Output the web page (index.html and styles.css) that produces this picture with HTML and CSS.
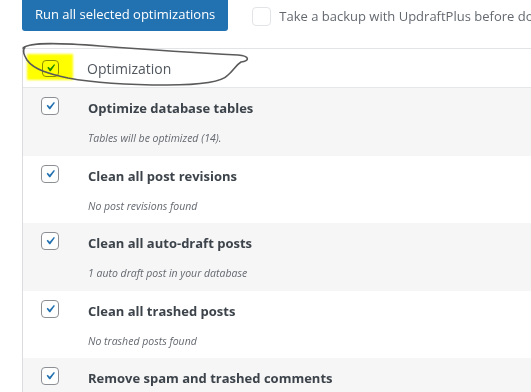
FILE: index.html
```html
<!DOCTYPE html>
<html lang="en">
<head>
    <meta charset="UTF-8">
    <meta name="viewport" content="width=device-width, initial-scale=1.0">
    <title>WP-Optimize</title>
    <link rel="stylesheet" href="styles.css">
</head>
<body>
    <div class="toolbar">
        <button class="btn">Run all selected optimizations</button>
        <label class="backup">
            <span class="box"></span>
            Take a backup with UpdraftPlus before doing this
        </label>
    </div>

    <div class="table">
        <div class="head">
            <span class="check small">
                <svg viewBox="0 0 20 20"><path d="M14.83 4.89l1.34.94-5.81 8.38H9.02L5.78 9.67l1.34-1.25 2.57 2.4z"/></svg>
            </span>
            <span class="head-title">Optimization</span>
        </div>

        <div class="row alt">
            <span class="check"><svg viewBox="0 0 20 20"><path d="M14.83 4.89l1.34.94-5.81 8.38H9.02L5.78 9.67l1.34-1.25 2.57 2.4z"/></svg></span>
            <div class="text">
                <div class="title">Optimize database tables</div>
                <div class="sub">Tables will be optimized (14).</div>
            </div>
        </div>
        <div class="row">
            <span class="check"><svg viewBox="0 0 20 20"><path d="M14.83 4.89l1.34.94-5.81 8.38H9.02L5.78 9.67l1.34-1.25 2.57 2.4z"/></svg></span>
            <div class="text">
                <div class="title">Clean all post revisions</div>
                <div class="sub">No post revisions found</div>
            </div>
        </div>
        <div class="row alt">
            <span class="check"><svg viewBox="0 0 20 20"><path d="M14.83 4.89l1.34.94-5.81 8.38H9.02L5.78 9.67l1.34-1.25 2.57 2.4z"/></svg></span>
            <div class="text">
                <div class="title">Clean all auto-draft posts</div>
                <div class="sub">1 auto draft post in your database</div>
            </div>
        </div>
        <div class="row">
            <span class="check"><svg viewBox="0 0 20 20"><path d="M14.83 4.89l1.34.94-5.81 8.38H9.02L5.78 9.67l1.34-1.25 2.57 2.4z"/></svg></span>
            <div class="text">
                <div class="title">Clean all trashed posts</div>
                <div class="sub">No trashed posts found</div>
            </div>
        </div>
        <div class="row alt last">
            <span class="check"><svg viewBox="0 0 20 20"><path d="M14.83 4.89l1.34.94-5.81 8.38H9.02L5.78 9.67l1.34-1.25 2.57 2.4z"/></svg></span>
            <div class="text">
                <div class="title">Remove spam and trashed comments</div>
            </div>
        </div>
    </div>

    <!-- hand-drawn annotation on top of the screenshot -->
    <div class="marker"></div>
    <svg class="scribble" viewBox="0 0 531 392" width="531" height="392">
        <path d="M23 48 C30 42 60 43 100 46 C140 49 200 53 238 55 C250 56 250 61 241 62 C236 65 234 70 228 75 C222 82 200 85 167 85 C130 85 95 83 68 78 C50 74 34 70 27 60 C24 55 22 51 25 47"/>
    </svg>
</body>
</html>
```

FILE: styles.css
```css
/* General */
body {
    margin: 0;
    background: #fff;
    font-family: "Open Sans", "Noto Sans", sans-serif;
    color: #3c434a;
    overflow: hidden;
    width: 531px;
    height: 392px;
    position: relative;
}

/* Top toolbar */
.toolbar {
    display: flex;
    align-items: center;
    padding-left: 22px;
    height: 31px;
}
.btn {
    margin-top: -4px;
    height: 35px;
    padding: 0 13px;
    width: 207px;
    background: #2271b1;
    color: #fff;
    border: 0;
    border-radius: 3px;
    font-family: inherit;
    font-size: 13px;
    white-space: nowrap;
}
.backup {
    display: flex;
    align-items: center;
    gap: 8px;
    margin-left: 24px;
    margin-top: 1px;
    font-size: 13px;
    color: #646970;
    white-space: nowrap;
}
.backup .box {
    width: 17px;
    height: 17px;
    border: 1px solid #e2e4e7;
    border-radius: 4px;
    flex: none;
}

/* Table */
.table {
    margin: 17px 0 0 22px;
    width: 620px;
    border-left: 1px solid #dcdcde;
    border-top: 1px solid #e3e4e6;
}
.head {
    display: flex;
    align-items: center;
    height: 38px;
    padding-left: 19px;
    border-bottom: 1px solid #e6e7e8;
}
.head-title {
    margin-left: 28px;
    font-size: 14px;
    color: #50575e;
}
.row {
    display: flex;
    align-items: flex-start;
    height: 67.5px;
    padding-left: 18px;
    box-sizing: border-box;
}
.row.alt {
    background: #f6f6f6;
}
.row.last {
    height: 40px;
}

/* Checkboxes */
.check {
    width: 16px;
    height: 16px;
    border: 1px solid #8c8f94;
    border-radius: 4px;
    background: #fff;
    display: flex;
    align-items: center;
    justify-content: center;
    flex: none;
}
.row .check {
    margin-top: 9px;
}
.check svg {
    width: 18px;
    height: 18px;
    fill: #2271b1;
}
.check.small {
    width: 15px;
    height: 15px;
    border-color: #8c8f60;
}
.check.small svg {
    fill: #1f8a1a;
}

.text {
    margin-left: 29px;
    padding-top: 10px;
}
.title {
    font-size: 13px;
    font-weight: 700;
    line-height: 20px;
    color: #3c434a;
    white-space: nowrap;
}
.sub {
    margin-top: 13px;
    font-size: 10.5px;
    font-style: italic;
    line-height: 14px;
    color: #646970;
    white-space: nowrap;
}

/* Annotation overlay */
.marker {
    position: absolute;
    left: 27px;
    top: 54px;
    width: 46px;
    height: 26px;
    background: #ffff00;
    mix-blend-mode: multiply;
    filter: blur(1px);
}
.scribble {
    position: absolute;
    left: 0;
    top: 0;
}
.scribble path {
    fill: none;
    stroke: #5a5a5a;
    stroke-width: 1.6;
    stroke-linecap: round;
}
```
